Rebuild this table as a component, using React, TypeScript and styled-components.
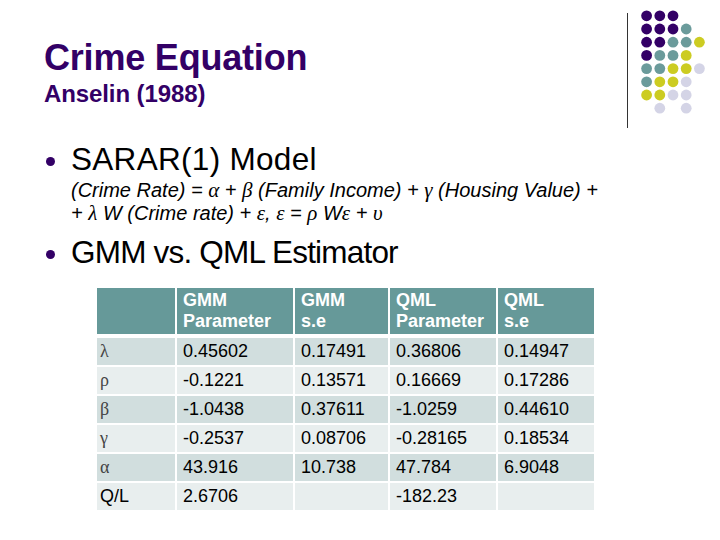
import React from "react";
import styled, { createGlobalStyle } from "styled-components";

const Global = createGlobalStyle`
  html, body { margin: 0; padding: 0; background: #ffffff; }
  body { font-family: "Liberation Sans", Arial, sans-serif; }
`;

const Slide = styled.div`
  width: 720px;
  height: 540px;
  box-sizing: border-box;
  padding-left: 44px;
  background: #ffffff;
  overflow: hidden;
  display: flex;
  flex-direction: column;
`;

const Header = styled.div`
  display: flex;
  justify-content: space-between;
  align-items: flex-start;
  height: 135px;
`;

const TitleBlock = styled.div`
  padding-top: 40px;
  display: flex;
  flex-direction: column;
`;

const Title = styled.h1`
  margin: 0;
  font-family: "Liberation Sans", Arial, sans-serif;
  font-weight: bold;
  font-size: 36px;
  line-height: 36px;
  color: #330066;
  letter-spacing: -0.2px;
`;

const Subtitle = styled.h2`
  margin: 6px 0 0 0;
  font-family: "Liberation Sans", Arial, sans-serif;
  font-weight: bold;
  font-size: 24px;
  line-height: 24px;
  color: #330066;
  letter-spacing: -0.1px;
`;

const Bullet = styled.div<{ $top: number }>`
  display: flex;
  align-items: center;
  margin-top: ${(p) => p.$top}px;
  padding-left: 2px;
`;

const Dot = styled.span`
  width: 9px;
  height: 9px;
  border-radius: 50%;
  background: #330066;
  margin: 4px 16px 0 0;
  flex: none;
`;

const BulletText = styled.div<{ $spacing: number }>`
  font-family: "Liberation Sans", Arial, sans-serif;
  font-size: 31.5px;
  line-height: 32px;
  color: #000000;
  letter-spacing: ${(p) => p.$spacing}px;
`;

const Formula = styled.div`
  margin-top: 4px;
  padding-left: 27px;
  font-family: "Liberation Sans", Arial, sans-serif;
  font-style: italic;
  font-size: 20px;
  line-height: 22.7px;
  color: #000000;
`;

const Greek = styled.span`
  font-family: "Liberation Serif", "Times New Roman", serif;
  font-style: italic;
  font-size: 21px;
`;

const Table = styled.table`
  margin-top: 20px;
  margin-left: 53px;
  border-collapse: collapse;
  table-layout: fixed;
  width: 497px;
  font-family: "Liberation Sans", Arial, sans-serif;
  font-size: 18px;
`;

const HeadCell = styled.th`
  background: #669999;
  color: #ffffff;
  font-weight: bold;
  text-align: left;
  vertical-align: middle;
  height: 46px;
  padding: 0 0 0 6px;
  line-height: 21px;
  border-right: 2px solid #ffffff;
  border-bottom: 4px solid #ffffff;
  &:last-child { border-right: none; }
`;

const Cell = styled.td<{ $band: boolean; $first?: boolean }>`
  background: ${(p) => (p.$band ? "#d1dede" : "#e8eeee")};
  color: #000000;
  height: 27px;
  padding: 0 0 0 ${(p) => (p.$first ? 3 : 6)}px;
  line-height: 21px;
  vertical-align: middle;
  border-right: 2px solid #ffffff;
  border-bottom: 2px solid #ffffff;
  &:last-child { border-right: none; }
`;

const Sym = styled.span`
  font-family: "Liberation Serif", "Times New Roman", serif;
  color: #444444;
  font-size: 18px;
`;

const Deco = () => {
  const P = "#330066";
  const T = "#6b9b9b";
  const Y = "#cccc22";
  const L = "#d4d4e6";
  const grid: (string | null)[][] = [
    [P, P, P, null, null],
    [P, P, P, T, null],
    [P, P, T, T, Y],
    [P, T, T, Y, null],
    [T, T, Y, Y, L],
    [T, Y, Y, L, null],
    [Y, Y, L, L, null],
    [null, L, null, L, null],
  ];
  return (
    <svg width="100" height="135" viewBox="0 0 100 135">
      <line x1="7.5" y1="13" x2="7.5" y2="128" stroke="#333333" strokeWidth="1" />
      {grid.map((row, r) =>
        row.map((c, i) =>
          c ? (
            <circle
              key={`${r}-${i}`}
              cx={26.6 + i * 13.2}
              cy={15.8 + r * 13.2}
              r={5.4}
              fill={c}
            />
          ) : null
        )
      )}
    </svg>
  );
};

const head = [
  ["GMM", "Parameter"],
  ["GMM", "s.e"],
  ["QML", "Parameter"],
  ["QML", "s.e"],
];

const rows: { k: string; sym: boolean; v: string[] }[] = [
  { k: "λ", sym: true, v: ["0.45602", "0.17491", "0.36806", "0.14947"] },
  { k: "ρ", sym: true, v: ["-0.1221", "0.13571", "0.16669", "0.17286"] },
  { k: "β", sym: true, v: ["-1.0438", "0.37611", "-1.0259", "0.44610"] },
  { k: "γ", sym: true, v: ["-0.2537", "0.08706", "-0.28165", "0.18534"] },
  { k: "α", sym: true, v: ["43.916", "10.738", "47.784", "6.9048"] },
  { k: "Q/L", sym: false, v: ["2.6706", "", "-182.23", ""] },
];

export default function App() {
  return (
    <>
      <Global />
      <Slide>
        <Header>
          <TitleBlock>
            <Title>Crime Equation</Title>
            <Subtitle>Anselin (1988)</Subtitle>
          </TitleBlock>
          <Deco />
        </Header>
        <Bullet $top={8}>
          <Dot />
          <BulletText $spacing={0.3}>SARAR(1) Model</BulletText>
        </Bullet>
        <Formula>
          <div>
            (Crime Rate) = <Greek>α</Greek> + <Greek>β</Greek> (Family Income) +{" "}
            <Greek>γ</Greek> (Housing Value) +
          </div>
          <div>
            + <Greek>λ</Greek> W (Crime rate) + <Greek>ε</Greek>, <Greek>ε</Greek> ={" "}
            <Greek>ρ</Greek> W<Greek>ε</Greek> + <Greek>υ</Greek>
          </div>
        </Formula>
        <Bullet $top={12}>
          <Dot />
          <BulletText $spacing={-0.8}>GMM vs. QML Estimator</BulletText>
        </Bullet>
        <Table>
          <colgroup>
            <col style={{ width: 79 }} />
            <col style={{ width: 118 }} />
            <col style={{ width: 95 }} />
            <col style={{ width: 108 }} />
            <col style={{ width: 97 }} />
          </colgroup>
          <thead>
            <tr>
              <HeadCell />
              {head.map((h, i) => (
                <HeadCell key={i}>
                  {h[0]}
                  <br />
                  {h[1]}
                </HeadCell>
              ))}
            </tr>
          </thead>
          <tbody>
            {rows.map((r, ri) => (
              <tr key={ri}>
                <Cell $band={ri % 2 === 0} $first>
                  {r.sym ? <Sym>{r.k}</Sym> : r.k}
                </Cell>
                {r.v.map((v, vi) => (
                  <Cell key={vi} $band={ri % 2 === 0}>
                    {v}
                  </Cell>
                ))}
              </tr>
            ))}
          </tbody>
        </Table>
      </Slide>
    </>
  );
}
